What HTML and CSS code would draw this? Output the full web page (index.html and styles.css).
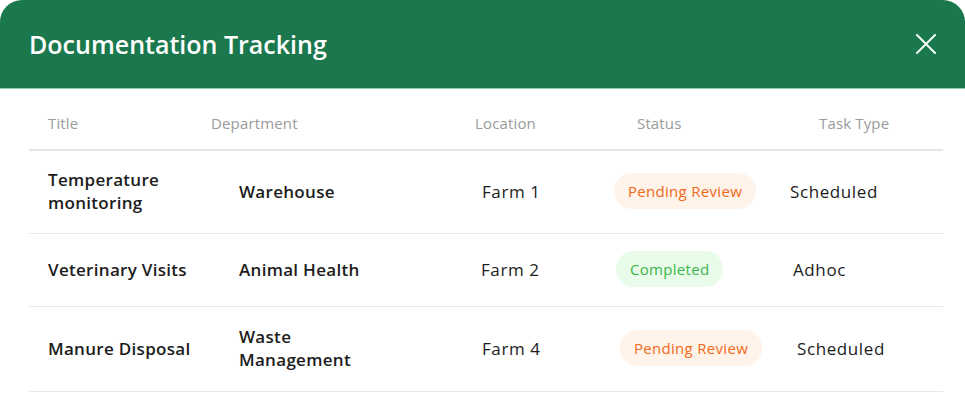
FILE: index.html
```html
<!DOCTYPE html>
<html lang="en">
<head>
<meta charset="utf-8">
<title>Documentation Tracking</title>
<link rel="stylesheet" href="styles.css">
</head>
<body>
<div class="card">
  <div class="card-header">
    <h1 class="card-title">Documentation Tracking</h1>
    <button class="close-btn" aria-label="Close">
      <svg width="20" height="20" viewBox="0 0 20 20" fill="none" stroke="currentColor" stroke-width="2" stroke-linecap="square"><path d="M1 1L19 19M19 1L1 19"/></svg>
    </button>
  </div>
  <div class="table">
    <div class="row row-head">
      <div class="th">Title</div>
      <div class="th">Department</div>
      <div class="th">Location</div>
      <div class="th">Status</div>
      <div class="th">Task Type</div>
    </div>
    <div class="row row-1">
      <div class="td strong">Temperature<br>monitoring</div>
      <div class="td strong">Warehouse</div>
      <div class="td">Farm 1</div>
      <div class="td"><span class="pill pending">Pending Review</span></div>
      <div class="td">Scheduled</div>
    </div>
    <div class="row row-2">
      <div class="td strong">Veterinary Visits</div>
      <div class="td strong">Animal Health</div>
      <div class="td">Farm 2</div>
      <div class="td"><span class="pill done">Completed</span></div>
      <div class="td">Adhoc</div>
    </div>
    <div class="row row-3">
      <div class="td strong">Manure Disposal</div>
      <div class="td strong">Waste<br>Management</div>
      <div class="td">Farm 4</div>
      <div class="td"><span class="pill pending">Pending Review</span></div>
      <div class="td">Scheduled</div>
    </div>
  </div>
</div>
</body>
</html>
```

FILE: styles.css
```css
* { box-sizing: border-box; }
html, body { margin: 0; padding: 0; background: #ffffff; }
body { font-family: "Open Sans", "Noto Sans", sans-serif; color: #1c1c1c; }

.card {
  width: 965px;
  background: #ffffff;
  border-radius: 22px 22px 0 0;
  overflow: hidden;
}
.card-header {
  height: 89px;
  background: #1b784d;
  display: flex;
  align-items: center;
  justify-content: space-between;
  padding: 0 29px 0 29px;
  border-bottom: 1px solid #8fd0ad;
}
.card-title {
  margin: 0;
  color: #ffffff;
  font-size: 25px;
  font-weight: 600;
  line-height: 30px;
}
.close-btn {
  background: none;
  border: 0;
  padding: 0;
  color: #f1fbf5;
  width: 20px;
  height: 20px;
  display: flex;
  cursor: pointer;
}

.table { padding: 0 22px 0 29px; }
.row {
  display: grid;
  align-items: center;
  padding: 17px 0 19px 19px;
  border-bottom: 1px solid #e8e8e8;
}
.row-head {
  padding: 23px 0 15px 19px;
  border-bottom: 2px solid #e6e6e6;
}
.row-head { grid-template-columns: 163px 264px 162px 182px 1fr; }
.row-1 { grid-template-columns: 191px 243px 132px 176px 1fr; }
.row-2 { grid-template-columns: 191px 242px 135px 177px 1fr; }
.row-3 { grid-template-columns: 191px 243px 138px 177px 1fr; padding: 18px 0 20px 19px; }

.th {
  font-size: 15px;
  letter-spacing: 0.15px;
  line-height: 22px;
  color: #9a9a9a;
}
.td {
  font-size: 17px;
  letter-spacing: 0.6px;
  line-height: 23px;
  color: #1c1c1c;
}
.td.strong { font-weight: 600; letter-spacing: 0.3px; }

.pill {
  display: inline-block;
  height: 36px;
  line-height: 36px;
  padding: 0 14px;
  border-radius: 18px;
  font-size: 15px;
  letter-spacing: 0.3px;
  font-weight: 500;
}
.pill.pending { background: #fff3ea; color: #f06a1a; }
.pill.done { background: #e9fbe9; color: #3bb649; }
```
